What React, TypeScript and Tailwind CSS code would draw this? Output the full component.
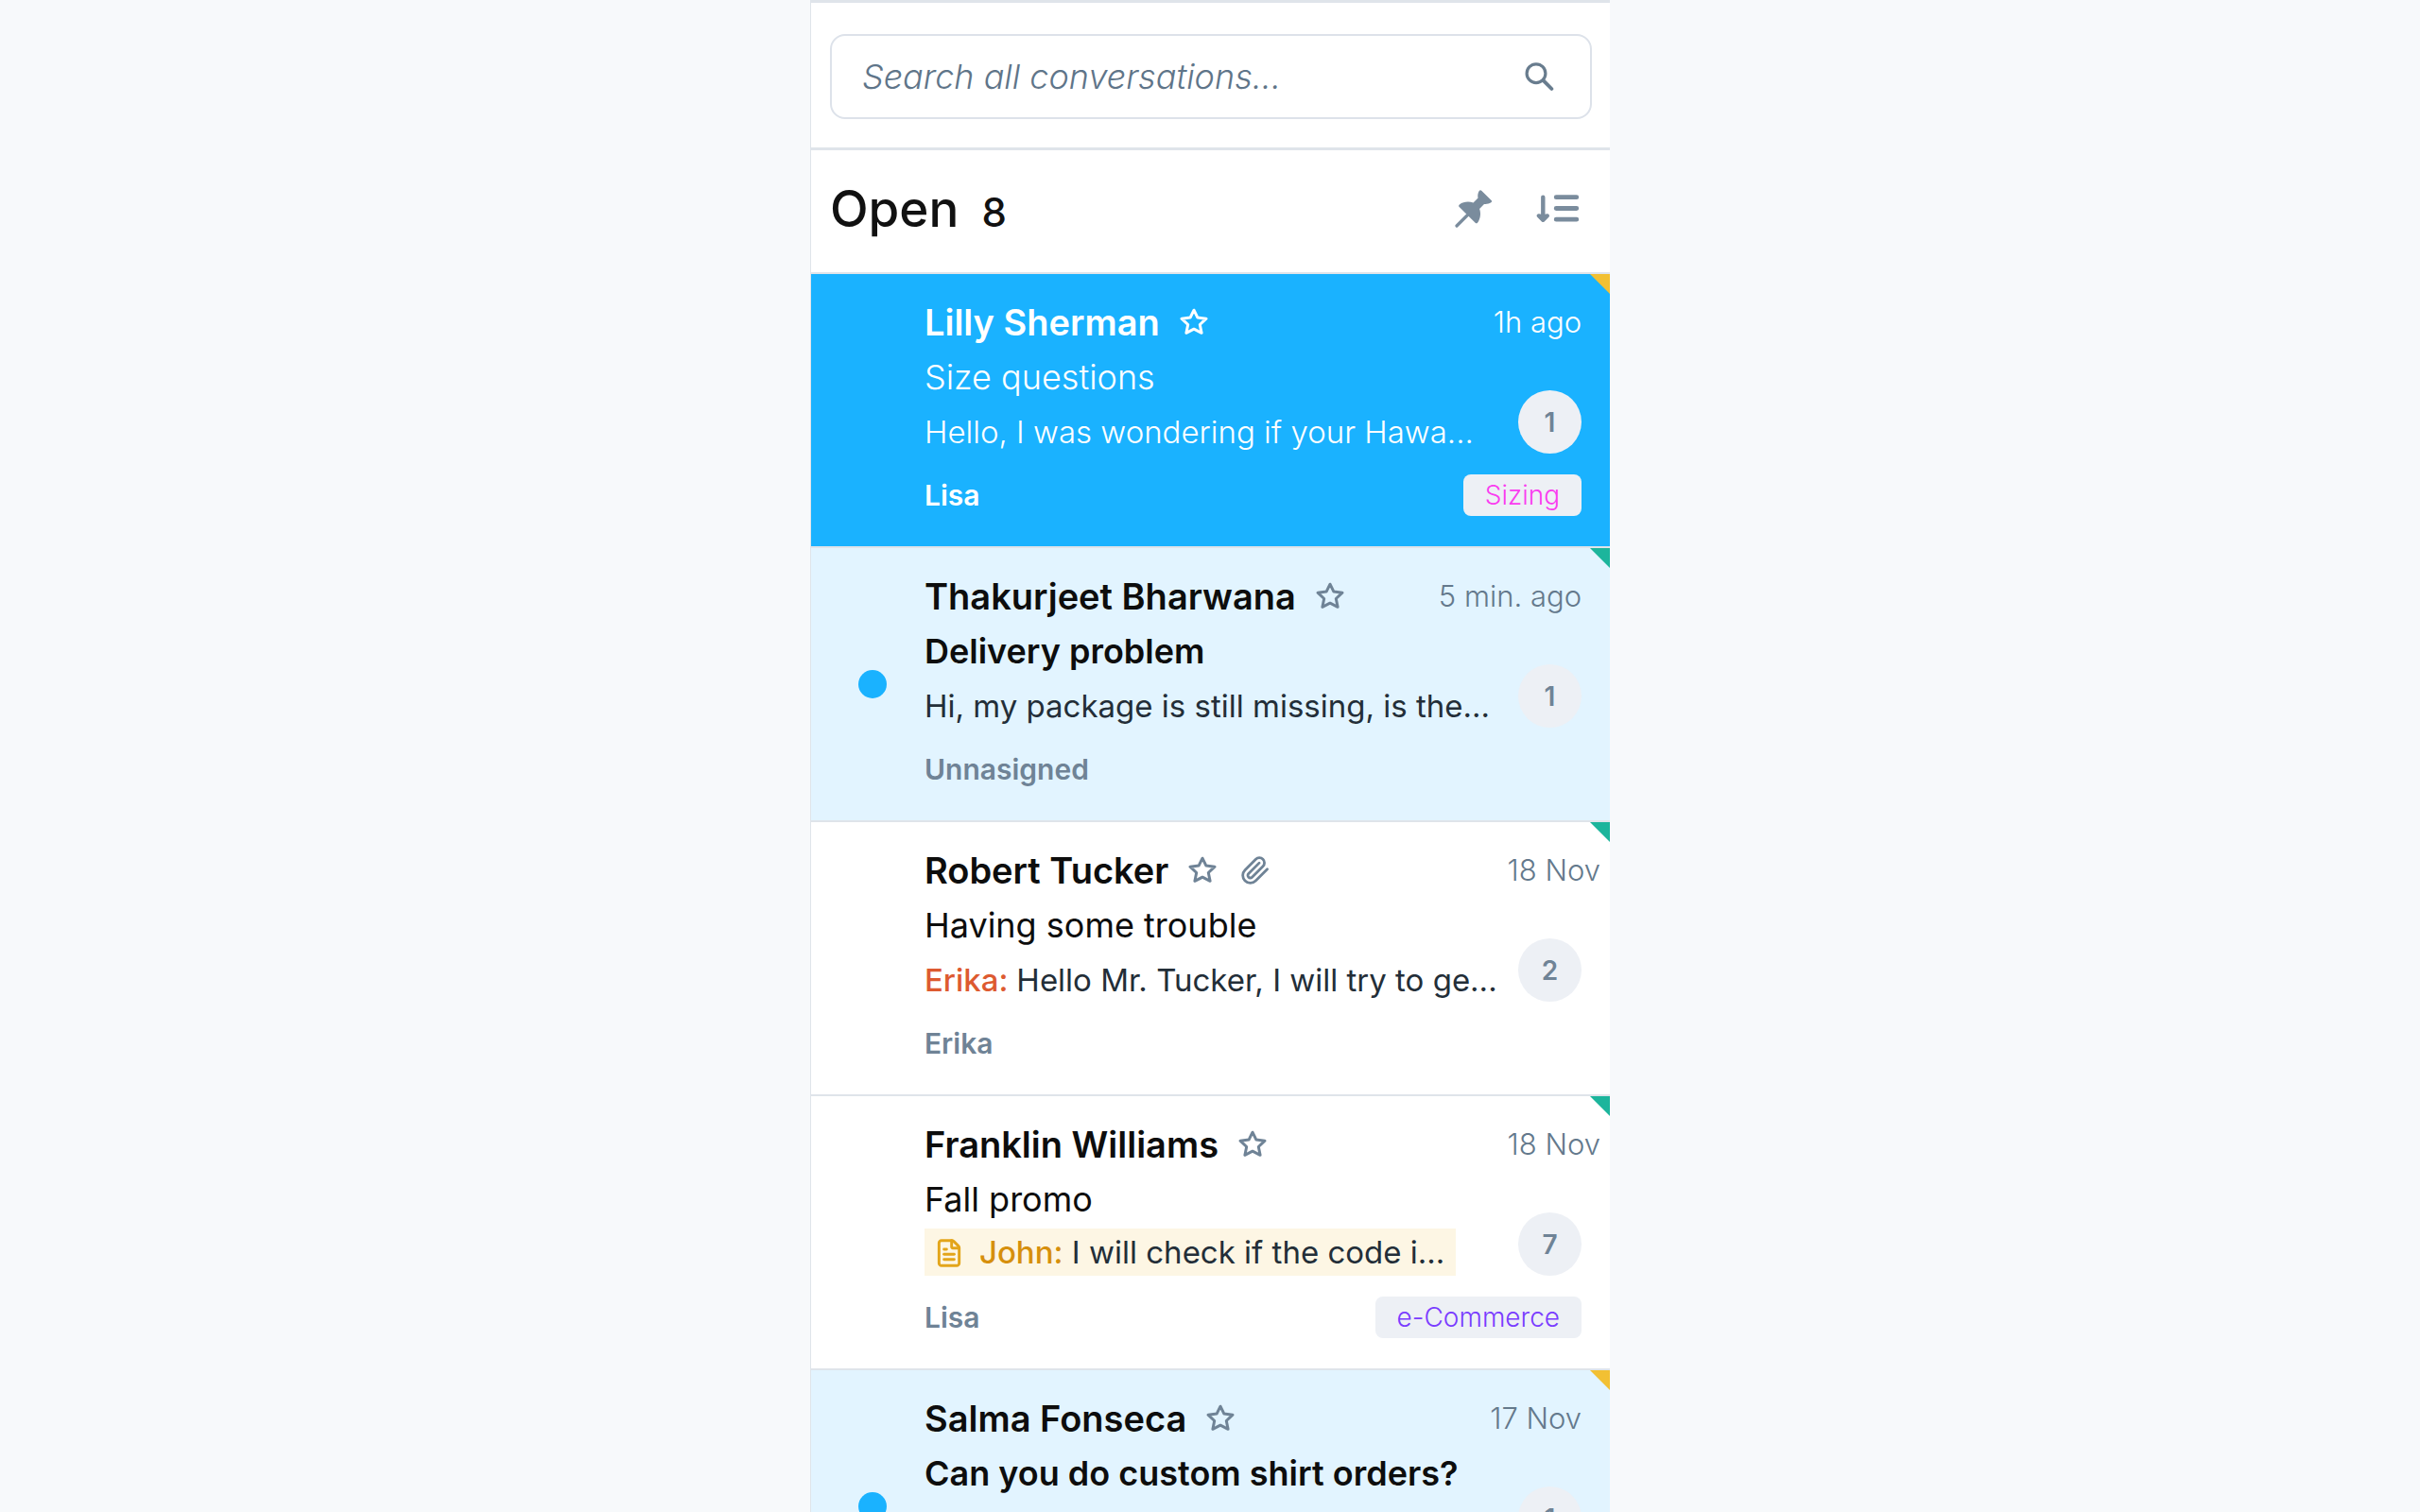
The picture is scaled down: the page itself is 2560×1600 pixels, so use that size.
import React from "react";
import { FileText } from "lucide-react";

type Conversation = {
  name: string;
  time: string;
  timeWide?: boolean;
  subject: string;
  author?: string;
  preview?: string;
  note?: boolean;
  attachment?: boolean;
  count: number;
  assignee?: string;
  tag?: { label: string; color: string };
  corner: string;
  state: "selected" | "unread" | "read";
};

const conversations: Conversation[] = [
  {
    name: "Lilly Sherman",
    time: "1h ago",
    subject: "Size questions",
    preview: "Hello, I was wondering if your Hawa...",
    count: 1,
    assignee: "Lisa",
    tag: { label: "Sizing", color: "text-[#fa3cf0]" },
    corner: "text-[#f2c033]",
    state: "selected",
  },
  {
    name: "Thakurjeet Bharwana",
    time: "5 min. ago",
    subject: "Delivery problem",
    preview: "Hi, my package is still missing, is the...",
    count: 1,
    assignee: "Unnasigned",
    corner: "text-[#1cb59c]",
    state: "unread",
  },
  {
    name: "Robert Tucker",
    time: "18 Nov",
    timeWide: true,
    subject: "Having some trouble",
    author: "Erika:",
    preview: "Hello Mr. Tucker, I will try to ge...",
    attachment: true,
    count: 2,
    assignee: "Erika",
    corner: "text-[#1cb59c]",
    state: "read",
  },
  {
    name: "Franklin Williams",
    time: "18 Nov",
    timeWide: true,
    subject: "Fall promo",
    author: "John:",
    preview: "I will check if the code i...",
    note: true,
    count: 7,
    assignee: "Lisa",
    tag: { label: "e-Commerce", color: "text-[#7a3cff]" },
    corner: "text-[#1cb59c]",
    state: "read",
  },
  {
    name: "Salma Fonseca",
    time: "17 Nov",
    subject: "Can you do custom shirt orders?",
    count: 1,
    corner: "text-[#f2c033]",
    state: "unread",
  },
];

function SearchIcon() {
  return (
    <svg width="32" height="32" viewBox="0 0 32 32" fill="none" stroke="currentColor" strokeLinecap="round" aria-hidden="true">
      <circle cx="13" cy="12.7" r="9.9" strokeWidth="3.2" />
      <path d="M20.6 20.2 29.4 29" strokeWidth="3.8" />
    </svg>
  );
}

function PinIcon() {
  return (
    <svg width="40" height="40" viewBox="0 0 40 40" fill="currentColor" aria-hidden="true">
      <path d="M25.9.8C26.5 0 27.5 0 28.2.7L38.6 11C39.4 11.8 39.3 12.8 38.3 13.3C36.2 14.5 33.6 15.3 31 14.9L26.1 19.9C27.8 24.5 27.2 30.5 24 34.7C23.3 35.5 22.3 35.5 21.6 34.8L4.7 18C3.9 17.2 4 16.1 4.9 15.4C9 12.4 14.5 11.8 19.5 13.5L24.5 8.5C23.9 5.7 24.4 3.1 25.9.8Z" />
      <path d="M2 38 13.5 26.5" stroke="currentColor" strokeWidth="3.2" strokeLinecap="round" />
    </svg>
  );
}

function SortIcon() {
  return (
    <svg width="46" height="30" viewBox="0 0 46 30" fill="none" stroke="currentColor" strokeLinecap="round" strokeLinejoin="round" aria-hidden="true">
      <path d="M7.3 2.8V23" strokeWidth="4.4" />
      <path d="M2.7 22.3 7.3 23.2 12 22.3 7.3 27Z" fill="currentColor" strokeWidth="4" />
      <path d="M21.2 2.7H42.8M21.2 14.5H42.8M21.2 26.2H42.8" strokeWidth="4.8" />
    </svg>
  );
}

function StarIcon() {
  return (
    <svg width="32" height="32" viewBox="0 0 32 32" fill="none" stroke="currentColor" strokeWidth="3" strokeLinejoin="round" aria-hidden="true">
      <path d="M16 3.2 19.9 11.1 29 12.2 22.3 18.5 24.1 27.3 16 23.2 7.9 27.3 9.7 18.5 3 12.2 12.1 11.1Z" />
    </svg>
  );
}

function PaperclipIcon() {
  return (
    <svg width="32" height="32" viewBox="0 0 24 24" fill="none" stroke="currentColor" strokeWidth="2.1" strokeLinecap="round" strokeLinejoin="round" aria-label="Attachment" role="img">
      <path d="m21.44 11.05-9.19 9.19a6 6 0 0 1-8.49-8.49l8.57-8.57A4 4 0 1 1 18 8.84l-8.59 8.57a2 2 0 0 1-2.83-2.83l8.49-8.48" />
    </svg>
  );
}

function Preview({ item }: { item: Conversation }) {
  if (item.note) {
    return (
      <p className="mt-[2px] mb-[6px] flex h-[50px] w-fit items-center gap-4 bg-[#fdf6e4] pt-[2px] pr-3 pl-[10px] whitespace-nowrap text-[#232e38]">
        <FileText className="size-8 text-[#e3a51a]" strokeWidth={2.2} aria-hidden="true" />
        <span>
          <b className="font-medium text-[#d68f0c]">{item.author}</b> {item.preview}
        </span>
      </p>
    );
  }
  return (
    <p className={`h-[58px] leading-[58px] whitespace-nowrap ${item.state === "selected" ? "font-light" : "text-[#232e38]"}`}>
      {item.author && <b className="font-medium text-[#dd5a30]">{item.author} </b>}
      {item.preview}
    </p>
  );
}

function Row({ item }: { item: Conversation }) {
  const selected = item.state === "selected";
  const unread = item.state === "unread";
  const rowColor = selected ? "bg-[#1ab2ff] text-white" : unread ? "bg-[#e2f4ff] text-[#0d0d0d]" : "bg-white text-[#0d0d0d]";
  const muted = selected ? "text-white" : "text-[#6f8396]";

  return (
    <li className={`relative flex shrink-0 border-t-2 border-[#dfe4ea] ${rowColor}`}>
      <svg className={`absolute top-0 right-0 ${item.corner}`} width="21" height="21" viewBox="0 0 21 21" fill="currentColor" aria-hidden="true">
        <path d="M0 0H21V21Z" />
      </svg>
      <div className="flex w-[120px] shrink-0 items-center pl-[50px]">
        {unread && <span className="size-[30px] rounded-full bg-[#1ab2ff]" aria-label="Unread" />}
      </div>
      <div className="min-w-0 flex-1 pt-[22px] pr-[30px] pb-8">
        <div className="flex h-[58px] items-center">
          <h2 className="text-[38px] leading-[58px] font-semibold whitespace-nowrap">{item.name}</h2>
          <div className={`ml-5 flex items-center gap-6 ${muted}`}>
            <button type="button" aria-label={`Star ${item.name}`}>
              <StarIcon />
            </button>
            {item.attachment && <PaperclipIcon />}
          </div>
          <time className={`ml-auto text-[31px] leading-[58px] font-light whitespace-nowrap ${selected ? "" : "text-[#64798c]"} ${item.timeWide ? "-mr-5" : ""}`}>
            {item.time}
          </time>
        </div>
        <div className="flex items-end justify-between">
          <div className="text-[33px]">
            <p className={`text-[36px] leading-[58px] whitespace-nowrap ${selected ? "font-light" : unread ? "font-semibold" : ""}`}>
              {item.subject}
            </p>
            <Preview item={item} />
          </div>
          <span className="mb-[6px] flex size-[67px] shrink-0 items-center justify-center rounded-full bg-[#edf0f5] text-[28px] font-semibold text-[#6f8396]">
            {item.count}
          </span>
        </div>
        <div className="mt-4 flex h-11 items-center justify-between">
          <span className={`text-[30px] font-semibold ${muted}`}>{item.assignee}</span>
          {item.tag && (
            <span className={`rounded-lg bg-[#edf0f5] px-[23px] text-[28px] leading-[44px] font-light ${item.tag.color}`}>
              {item.tag.label}
            </span>
          )}
        </div>
      </div>
    </li>
  );
}

export default function App() {
  return (
    <div className="flex h-screen justify-center overflow-hidden bg-[#f7f9fb] font-['Inter',sans-serif]">
      <main className="flex w-[33.05%] min-w-[800px] flex-col border-l border-[#dfe4ea] bg-white">
        <form className="border-t-[3px] border-b-[3px] border-[#dfe4ea] pt-[33px] pr-[19px] pb-[30px] pl-5" role="search">
          <label className="flex h-[90px] items-center rounded-2xl border-2 border-[#dde2ea] pr-[38px] pl-8 text-[#687c8e]">
            <input
              type="search"
              aria-label="Search all conversations"
              placeholder="Search all conversations..."
              className="min-w-0 flex-1 bg-transparent text-[36px] font-light italic outline-none placeholder:text-[#5f7589] placeholder:opacity-100"
            />
            <SearchIcon />
          </label>
        </form>
        <header className="flex items-center justify-between pt-[30px] pr-8 pb-[35px] pl-5">
          <h1 className="flex items-baseline gap-6 text-[53px] leading-[64px] font-medium text-[#111111]">
            Open <span className="text-[42px] leading-none">8</span>
          </h1>
          <div className="flex items-center gap-[46px] text-[#7a8c9d]">
            <button type="button" aria-label="Pinned">
              <PinIcon />
            </button>
            <button type="button" aria-label="Sort">
              <SortIcon />
            </button>
          </div>
        </header>
        <ul className="flex flex-col">
          {conversations.map((item) => (
            <Row key={item.name} item={item} />
          ))}
        </ul>
      </main>
    </div>
  );
}
